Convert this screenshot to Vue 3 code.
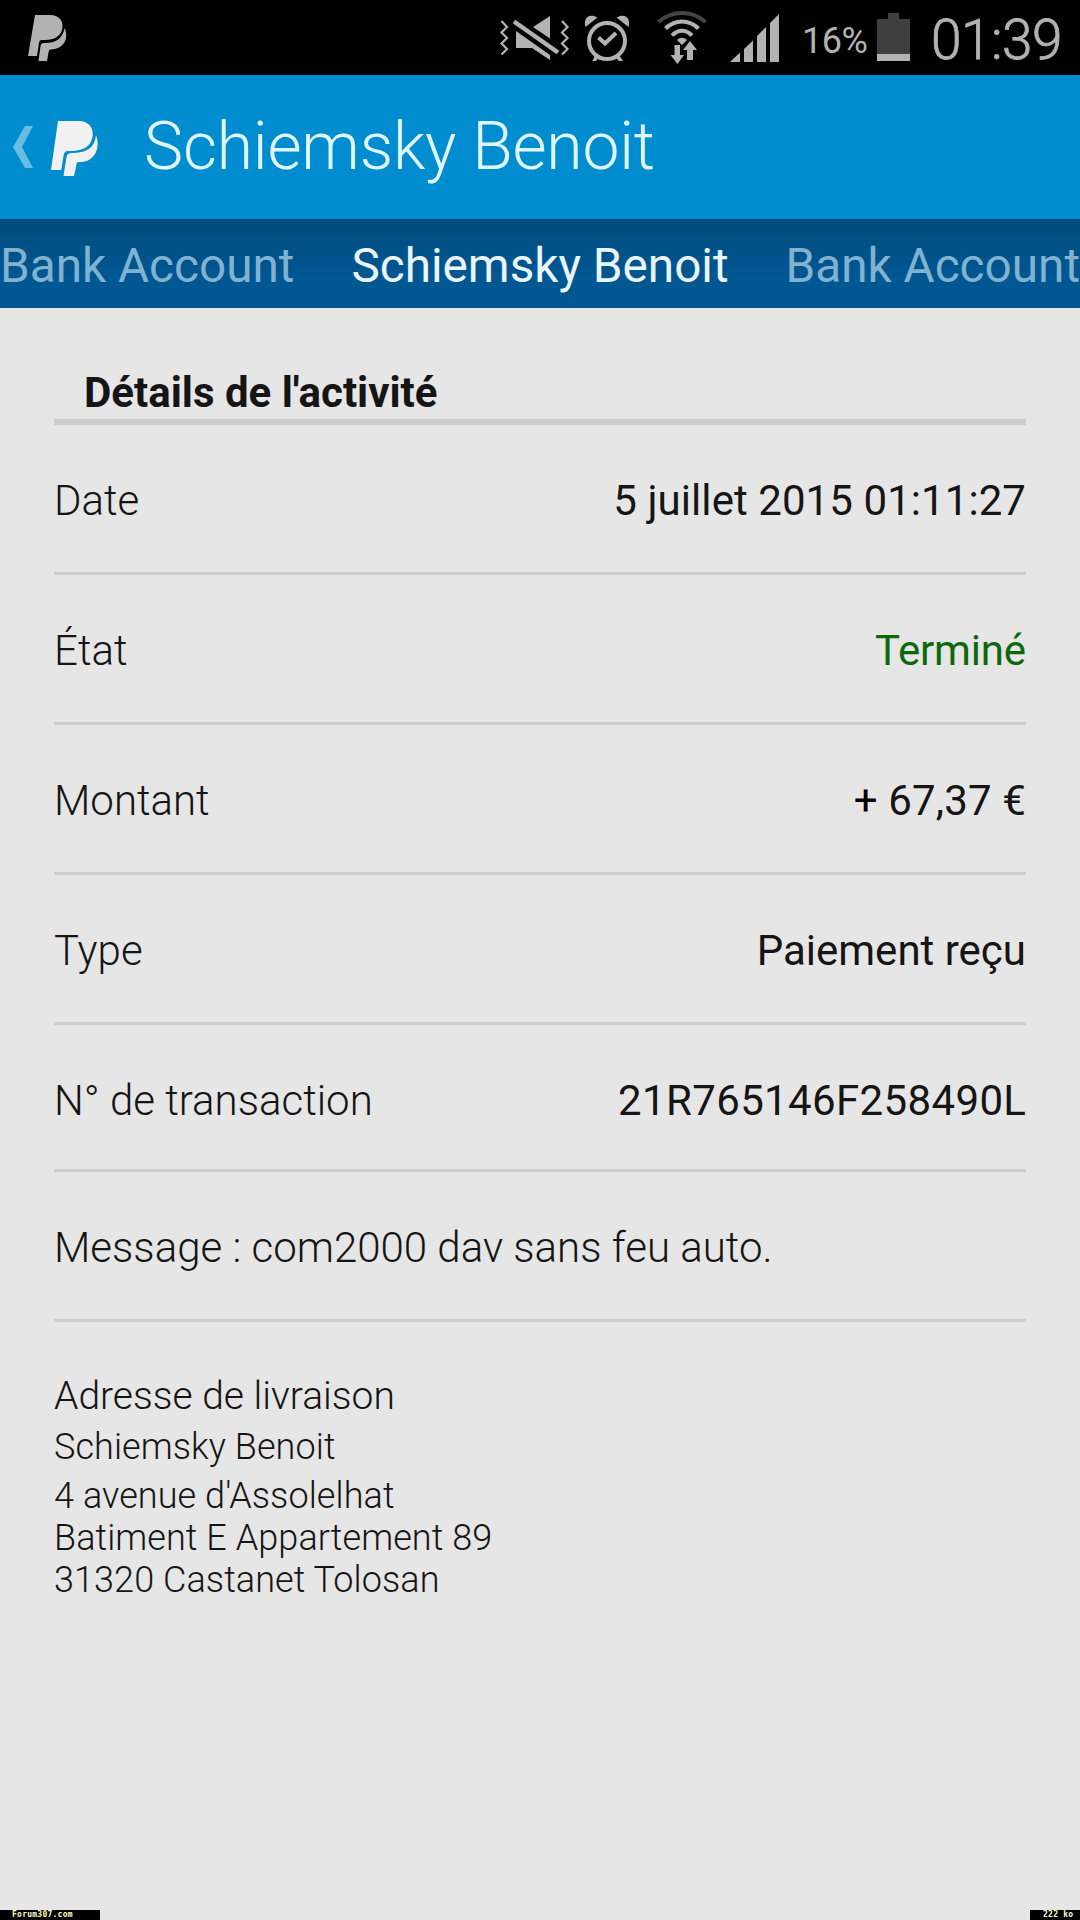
<script setup>
const rows = [
  { label: 'Date', value: '5 juillet 2015 01:11:27', tone: 'date' },
  { label: 'État', value: 'Terminé', tone: 'done' },
  { label: 'Montant', sign: '+', value: ' 67,37 €', tone: 'amount' },
  { label: 'Type', value: 'Paiement reçu' },
  { label: 'N° de transaction', value: '21R765146F258490L', tone: 'short' },
]
</script>

<template>
  <div class="screen">
    <header class="status">
      <svg class="notif" viewBox="0 0 47 55"><path d="M7 0H22C32 0 36 7 34 15C31 24 23 25 14 25C12 25 11 26 10.700 30L9 41H0Z" /><path d="M36.500 13C41 22 37 34 23 34.500C21 34.500 21 35.500 20.500 37.500L19 46H10.500L12.500 31C13 28.500 14.500 28 17 28C27 28 35 24 36.500 13Z" /></svg>
      <svg class="mute" viewBox="0 0 300 76">
        <g fill="none" stroke="#b2b2b2" stroke-width="2.200">
          <path d="M21.500 21L27 27L21.500 32.500L27 38L21.500 43.500L27 49L21.500 54.500M82 21L87.500 27L82 32.500L87.500 38L82 43.500L87.500 49L82 54.500" />
          <path stroke-width="4.500" d="M34 21.500L78 52.500" />
        </g>
        <path d="M70 16V38.500L53 27ZM36 31L70 55V60L52 48H36Z" />
        <circle cx="127" cy="41" r="18" fill="none" stroke="#b2b2b2" stroke-width="4" />
        <path d="M105.500 27C103 18 109 13 117.500 17.500ZM148.500 27C151 18 145 13 136.500 17.500Z" />
        <path d="M118.500 37.500L125 43.500L136 33" fill="none" stroke="#b2b2b2" stroke-width="4" />
        <path d="M115 55L112.500 61H116L119 57ZM139 55L143 61H139L135 57Z" />
        <g fill="none" stroke="#b2b2b2" stroke-width="4">
          <path stroke="#444" d="M178.500 22C192 10 212 10 225.500 22" />
          <path d="M185.500 28.500C195 19 209 19 218.500 28.500M192 35.500C198 29 206 29 212 35.500" />
        </g>
        <path d="M197 40C200 37 204 37 207 40L202 45ZM194.500 45H200V55H204L197.500 64L190.500 55H194.500ZM210 41L217 50H213V60H207V50H203Z" />
        <path d="M250 62L260 52.500V62ZM264 62V49L273 40.500V62ZM277 62V36L286 27V62ZM290 62V23L299 14V62Z" />
      </svg>
      <span class="percent">16%</span>
      <svg class="battery" viewBox="0 0 33 48"><path fill="#3f3f3f" d="M11 0H22V6H33V41H0V6H11Z" /><path d="M0 41H33V48H0Z" /></svg>
      <span class="clock">01:39</span>
    </header>
    <div class="bar">
      <svg class="back" viewBox="0 0 20 42"><path d="M12 0H20L9 21L20 42H12L0 21Z" /></svg>
      <svg class="logo" viewBox="0 0 47 55"><path d="M7 0H28C38 0 44 8 41 18C38 28 29 30 18 30C14 30 13 32 12.500 35L10.300 49H0Z" /><path d="M45 14C50 28 43 41 29 41C25 41 25.500 43 25 46L23 55H12.500L15.500 36C16 33 18 32 21 32C35 32 44 27 45 14Z" /></svg>
      <h1>Schiemsky Benoit</h1>
    </div>
    <nav class="tabs"><span>Bank Account</span><span class="active">Schiemsky Benoit</span><span>Bank Account</span></nav>
    <main>
      <h2>Détails de l'activité</h2>
      <div v-for="r in rows" :key="r.label" class="row" :class="r.tone">
        <span class="label">{{ r.label }}</span>
        <span class="value"><b v-if="r.sign">{{ r.sign }}</b>{{ r.value }}</span>
      </div>
      <div class="row message"><span class="label">Message : com2000 dav sans feu auto.</span></div>
      <section class="address">
        <h3>Adresse de livraison</h3>
        <p class="name">Schiemsky Benoit</p>
        <p>4 avenue d'Assolelhat</p>
        <p>Batiment E Appartement 89</p>
        <p>31320 Castanet Tolosan</p>
      </section>
    </main>
    <footer><span class="site">Forum307.com</span><span class="size">222 ko</span></footer>
  </div>
</template>

<style>
body { margin: 0; background: #e6e6e6; }
</style>

<style scoped>
.screen { width: 1080px; height: 1920px; display: flex; flex-direction: column; overflow: hidden; background: #e6e6e6; color: #151515; font-family: Roboto, sans-serif; }
h1, h2, h3, p { margin: 0; }
svg { display: block; flex: none; }
.status { height: 75px; flex: none; display: flex; align-items: flex-start; background: #000; color: #b2b2b2; fill: #b2b2b2; white-space: nowrap; }
.notif { width: 47px; height: 55px; margin: 15px 0 0 28px; }
.mute { width: 300px; height: 76px; margin-left: 405px; }
.percent { width: 67px; margin: 19px 0 0 22px; font-size: 36px; line-height: 44px; letter-spacing: -0.5px; }
.battery { width: 33px; height: 48px; margin: 13px 0 0 8px; }
.clock { margin: 7px 0 0 21px; font-size: 55px; line-height: 66px; font-weight: 300; letter-spacing: -0.5px; -webkit-text-stroke: 0.8px #b2b2b2; }
.bar { height: 144px; flex: none; display: flex; align-items: flex-start; background: #008dcf; }
.back { width: 20px; height: 42px; margin: 51px 0 0 13px; fill: #68bde3; }
.logo { width: 47px; height: 55px; margin: 46px 0 0 18px; fill: #f1f1f1; }
h1 { margin: 32px 0 0 46px; color: #dff6ff; font-size: 66px; line-height: 80px; font-weight: 300; letter-spacing: -0.2px; white-space: nowrap; }
.tabs { height: 89px; flex: none; display: flex; justify-content: space-between; background: linear-gradient(#004a7e, #005085 25%, #005792 65%); color: #80b2d1; font-size: 47.7px; line-height: 95px; white-space: nowrap; }
.active { color: #eaf5ff; }
main { flex: 1; padding: 0 54px; }
h2 { height: 111px; box-sizing: content-box; border-bottom: 6px solid #cdcdcd; padding-left: 30px; font-size: 42px; line-height: 170px; font-weight: 700; }
.row { height: 147px; display: flex; justify-content: space-between; border-bottom: 3px solid #cdcdcd; font-size: 42px; line-height: 152px; white-space: nowrap; }
.short { height: 144px; }
.short .value { letter-spacing: 0.36px; margin-right: -0.36px; }
.date .value { letter-spacing: 0.07px; }
.amount .value { letter-spacing: 0.15px; }
.label { font-weight: 300; }
.value { white-space: pre; }
.value b { color: #000; font-weight: 400; }
.done .value { color: #0d680b; letter-spacing: -0.15px; }
.address { padding-top: 47px; font-size: 36px; line-height: 42px; font-weight: 300; letter-spacing: 0.07px; }
h3 { font-size: 39px; line-height: 54px; font-weight: 300; letter-spacing: 0; }
.name { line-height: 48px; padding-bottom: 4px; }
footer { height: 10px; flex: none; display: flex; justify-content: space-between; color: #ffffc8; font: bold 8px/9px "DejaVu Sans Mono", monospace; letter-spacing: 0.25px; }
footer span { height: 10px; box-sizing: border-box; background: #000; white-space: nowrap; }
.site { width: 100px; padding-left: 12px; }
.size { width: 50px; padding-left: 13px; }
</style>
